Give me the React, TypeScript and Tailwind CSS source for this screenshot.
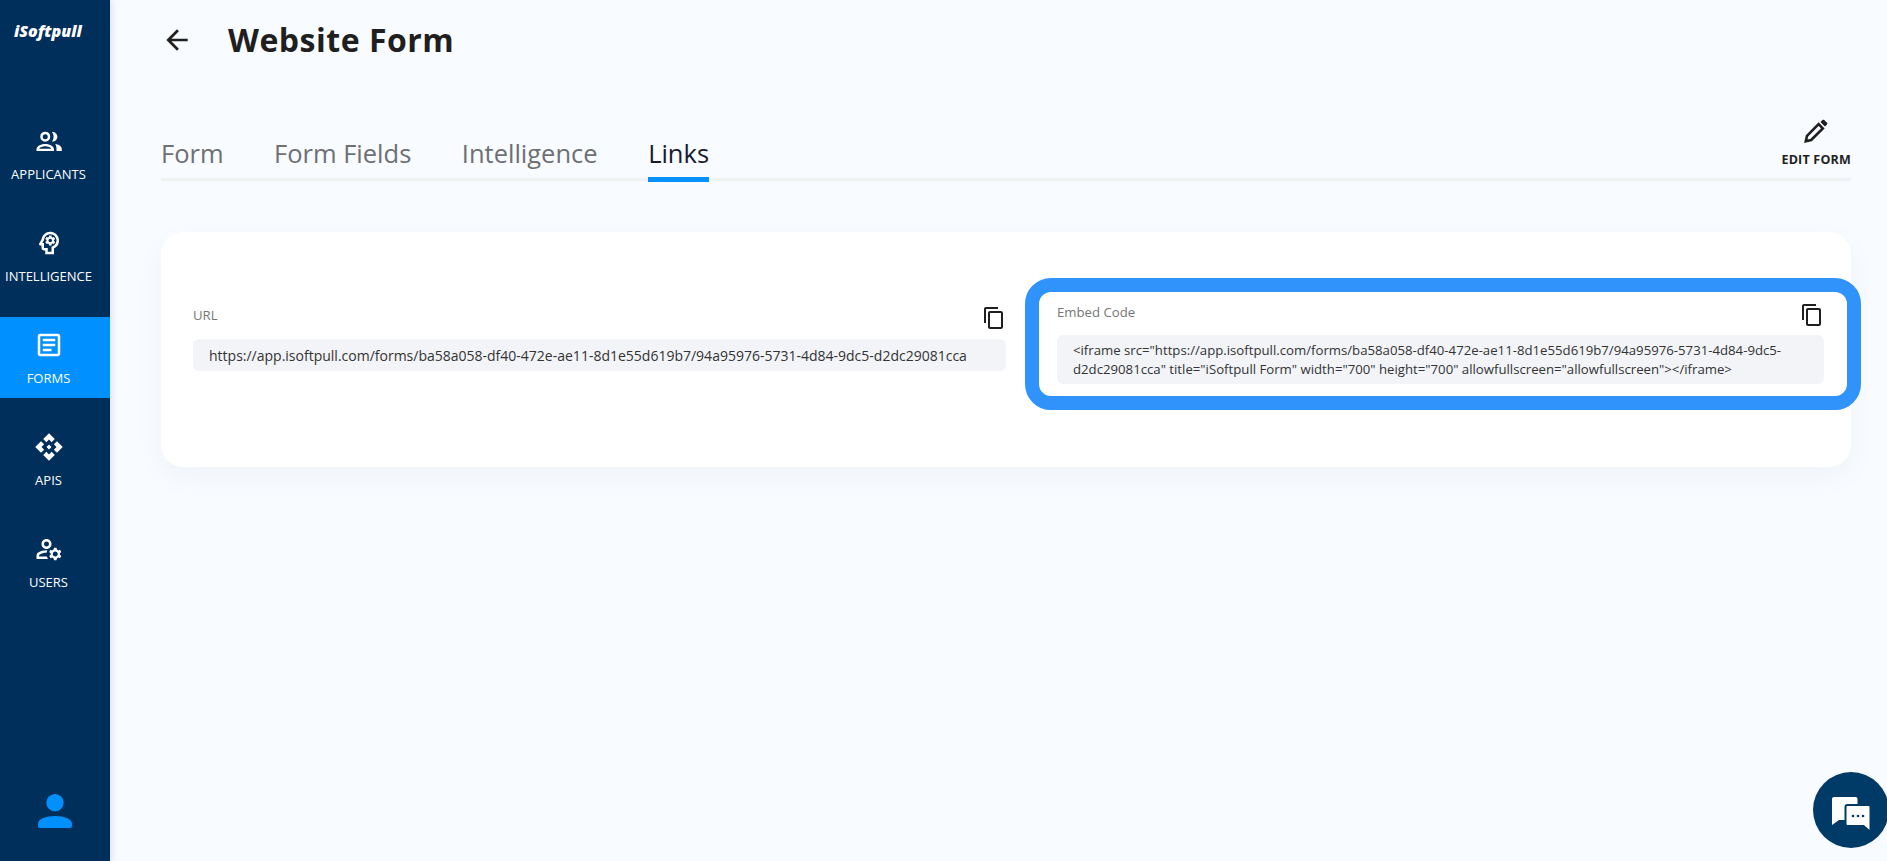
import React from 'react';
import {
  MdApi,
  MdArrowBack,
  MdContentCopy,
  MdOutlineArticle,
  MdOutlineManageAccounts,
  MdOutlinePsychology,
} from 'react-icons/md';

const formUrl = 'https://app.isoftpull.com/forms/ba58a058-df40-472e-ae11-8d1e55d619b7/94a95976-5731-4d84-9dc5-d2dc29081cca';
const embedCode = `<iframe src="${formUrl}" title="iSoftpull Form" width="700" height="700" allowfullscreen="allowfullscreen"></iframe>`;

// ring head, crescent behind it, hollow shoulders
const ApplicantsIcon = ({ className }: { className?: string }) => (
  <svg viewBox="0 0 24 24" className={className} fill="currentColor">
    <circle cx="9" cy="8.500" r="3" fill="none" stroke="currentColor" strokeWidth="2" />
    <path d="M14.300 4.800c2.300-.3 4.400 1.500 4.400 3.800s-2.100 4.100-4.400 3.800c.9-1 1.400-2.300 1.400-3.800s-.5-2.800-1.400-3.800z" />
    <path d="M2 20v-1.600c0-2.700 4.300-4.100 7-4.100s7 1.400 7 4.100V20H2zm2.200-1.900h9.600c-.3-1-3-1.900-4.800-1.900s-4.500.9-4.800 1.900z" fillRule="evenodd" />
    <path d="M17 14.300c2.700.4 5.200 1.700 5.200 4V20h-4.200v-1.700c0-1.500-.4-2.900-1-4z" />
  </svg>
);

const navItems = [
  { label: 'APPLICANTS', icon: ApplicantsIcon },
  { label: 'INTELLIGENCE', icon: MdOutlinePsychology },
  { label: 'FORMS', icon: MdOutlineArticle, active: true },
  { label: 'APIS', icon: MdApi },
  { label: 'USERS', icon: MdOutlineManageAccounts },
];

const tabs = ['Form', 'Form Fields', 'Intelligence', 'Links'];

const Sidebar = () => (
  <aside className="flex h-full w-[110px] shrink-0 flex-col bg-[#002f5c] shadow-[2px_0_6px_rgba(0,47,92,0.12)]">
    <div className="h-[113px] pl-[14px] pt-[20px] text-[16px] leading-[22px] font-extrabold italic text-white">iSoftpull</div>
    <nav className="flex flex-col gap-[21px]">
      {navItems.map((item) => (
        <div
          key={item.label}
          className={`flex h-[81px] flex-col items-center pr-[13px] pt-[13px] text-white ${item.active ? 'bg-[#0090ff]' : ''}`}
        >
          <item.icon className="h-[30px] w-[30px]" />
          <span className="mt-[9px] text-[13px] leading-[18px]">{item.label}</span>
        </div>
      ))}
    </nav>
    <div className="mt-auto mb-[33px] flex justify-center">
      <svg width="34" height="34" viewBox="0 0 34 34" fill="#0090ff">
        <circle cx="17" cy="8.700" r="8.700" />
        <path d="M0 32v-2.500C0 25 8 22 17 22s17 3 17 7.500V32c0 1-.8 2-2 2H2c-1.200 0-2-1-2-2z" />
      </svg>
    </div>
  </aside>
);

const CopyField = ({ label, children, className }: { label: string; children: React.ReactNode; className: string }) => (
  <div className={className}>
    <div className="flex h-[24px] items-start justify-between">
      <span className="mt-[1px] text-[13.200px] leading-[16px] text-[#767676]">{label}</span>
      <MdContentCopy className="h-[24px] w-[24px] text-[#1f1f1f]" />
    </div>
    {children}
  </div>
);

export default function App() {
  return (
    <div className="flex h-[861px] w-full overflow-hidden bg-[#f8fbff] font-['Open_Sans',sans-serif]">
      <Sidebar />
      <main className="min-w-0 flex-1 pl-[51px] pr-[36px]">
        <header className="flex h-[80px] items-center gap-[35px]">
          <MdArrowBack className="h-[32px] w-[32px] text-[#1f1f1f]" />
          <h1 className="text-[32px] font-bold tracking-[0.5px] text-[#1f1f1f]">Website Form</h1>
        </header>

        <div className="flex h-[101px] items-end justify-between border-b-[3px] border-[#f0f1f3]">
          <div className="-mb-[4px] flex gap-[50.500px]">
            {tabs.map((tab) => (
              <div
                key={tab}
                className={`border-b-[5px] pb-[5px] text-[25.500px] leading-[38px] ${tab === 'Links' ? 'border-[#0090ff] text-[#1a1a2e]' : 'border-transparent text-[#6e7073]'}`}
              >
                {tab}
              </div>
            ))}
          </div>
          <div className="mb-[10px] flex flex-col items-center">
            <svg width="24" height="24" viewBox="0 0 24 24" className="mb-[9px] text-[#1f1f1f]">
              <path d="M1.800 22.200l1.200-5.400L14.600 5.200l4.200 4.200L7.200 21z" fill="none" stroke="currentColor" strokeWidth="2.600" />
              <path d="M16.400 3.100l2.100-2.100c.5-.5 1.200-.5 1.700 0l2.800 2.800c.5.5.5 1.200 0 1.700l-2.100 2.100z" fill="currentColor" />
            </svg>
            <span className="text-[12.500px] leading-[16px] font-bold tracking-[0.2px] text-[#1f1f1f]">EDIT FORM</span>
          </div>
        </div>

        <section className="mt-[51px] flex h-[235px] items-start gap-[51px] rounded-[22px] bg-white pl-[32px] pr-[27px] shadow-[0_10px_30px_rgba(0,47,92,0.04)]">
          <CopyField label="URL" className="mt-[74px] w-[813px] shrink-0">
            <div className="mt-[9px] flex h-[32px] items-center rounded-[6px] bg-[#f2f4f8] px-[16px] text-[14px] text-[#333333]">{formUrl}</div>
          </CopyField>
          <CopyField label="Embed Code" className="relative mt-[71px] min-w-0 flex-1">
            <div className="mt-[8px] flex h-[49px] items-center rounded-[6px] bg-[#f2f4f8] px-[16px] text-[13.200px] leading-[19px] break-words text-[#333333]">
              <p>{embedCode}</p>
            </div>
            {/* annotation drawn over the embed field */}
            <div className="pointer-events-none absolute -top-[25px] -right-[37px] -bottom-[26px] -left-[32px] rounded-[26px] border-[14px] border-[#3092fb]" />
          </CopyField>
        </section>
      </main>

      <div className="fixed -right-[2px] bottom-[13px] flex h-[76px] w-[76px] rounded-full bg-[#003a66]">
        <svg width="76" height="76" viewBox="0 0 76 76">
          <path d="M21 25h21.500a2 2 0 0 1 2 2v21H26l-7 5V27a2 2 0 0 1 2-2z" fill="#fff" />
          <path d="M34.500 33h21a2 2 0 0 1 2 2v25l-7-6H34.500a2 2 0 0 1-2-2V35a2 2 0 0 1 2-2z" fill="#fff" stroke="#003a66" strokeWidth="2" />
          <circle cx="40" cy="44" r="1.300" fill="#003a66" />
          <circle cx="45" cy="44" r="1.300" fill="#003a66" />
          <circle cx="50" cy="44" r="1.300" fill="#003a66" />
        </svg>
      </div>
    </div>
  );
}
